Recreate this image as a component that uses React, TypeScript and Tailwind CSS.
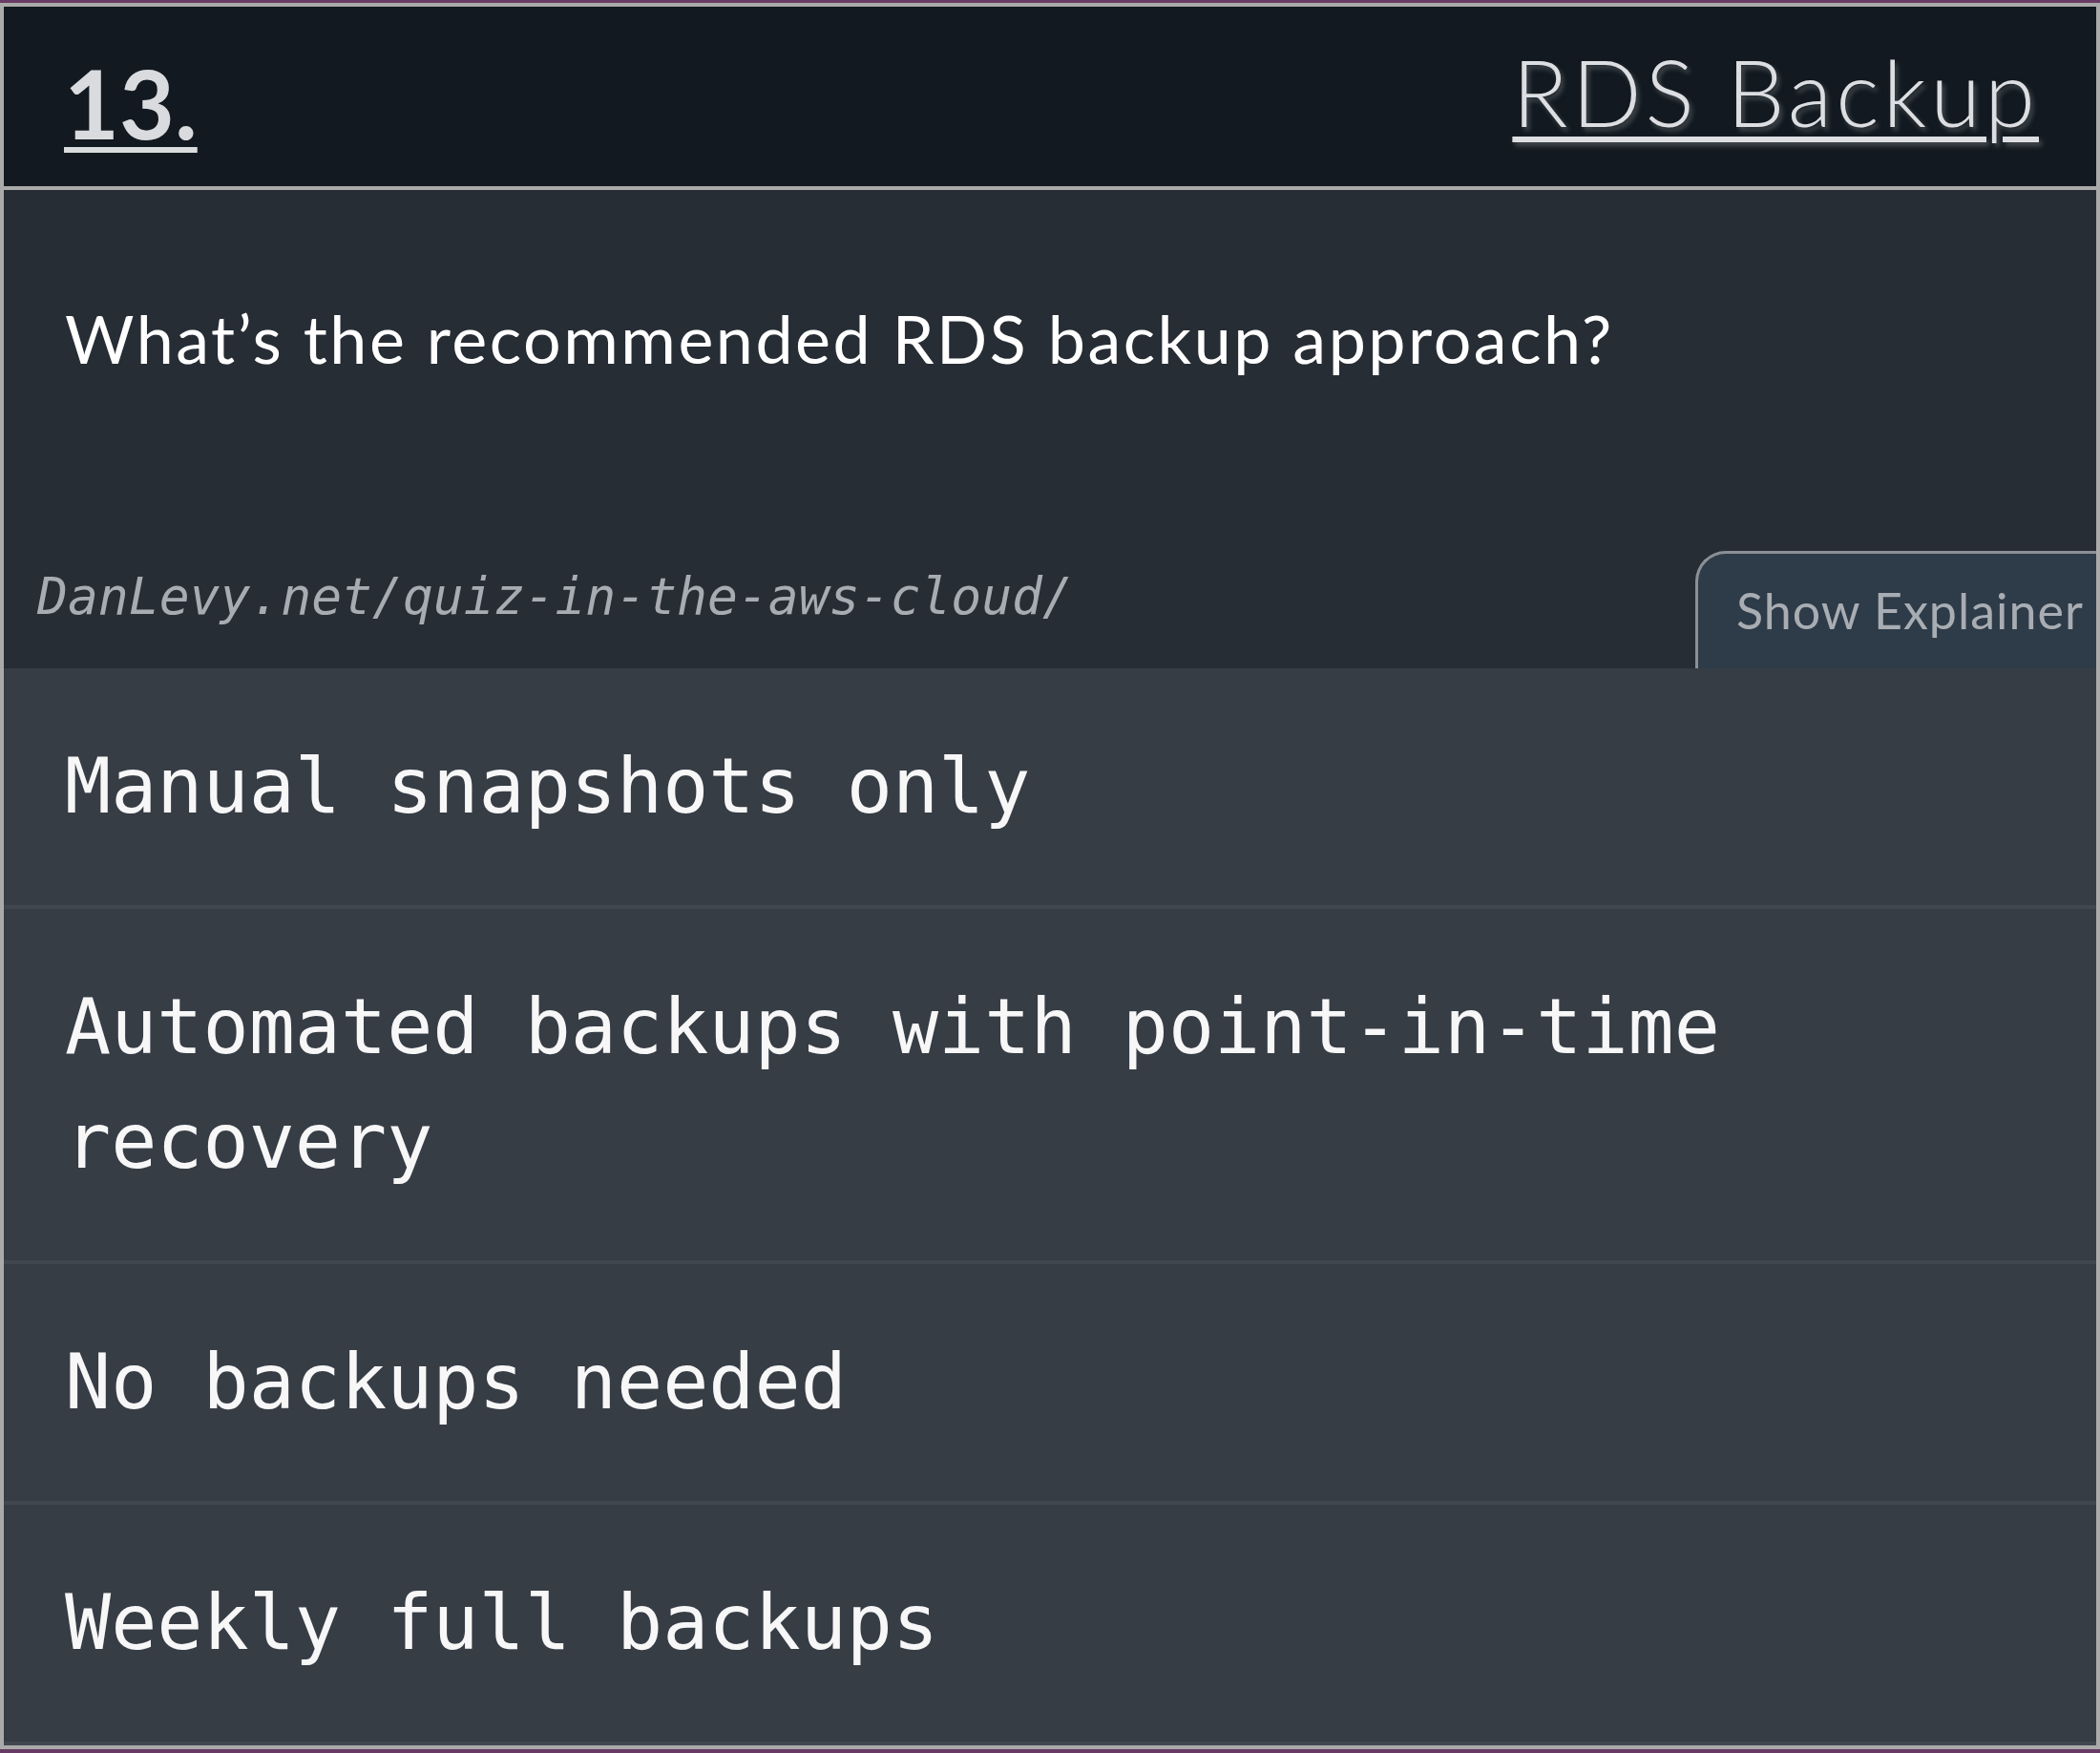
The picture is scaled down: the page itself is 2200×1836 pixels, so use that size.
// Quiz card: RDS Backup question

const options = [
  'Manual snapshots only',
  'Automated backups with point-in-time recovery',
  'No backups needed',
  'Weekly full backups',
];

export default function App() {
  return (
    <div className="min-h-screen bg-[#673b65] pt-[3px] pb-[4px]">
      <div className="border-4 border-[#aaaaaa] overflow-hidden">
        {/* header */}
        <header className="h-[192px] bg-[#121920] border-b-4 border-[#aaaaaa] pl-[63px] pr-16 flex items-start justify-between font-['Lato',sans-serif]">
          <span className="mt-[50px] text-[100px] leading-none font-bold text-[#d9dbde] underline decoration-[6px] underline-offset-[8px]">
            13.
          </span>
          <h1 className="mt-[41px] -mr-[4px] text-[96px] leading-none font-light tracking-[4px] text-[#dcdee1] underline decoration-[6px] underline-offset-[10px] [text-shadow:3px_4px_5px_rgba(120,125,130,0.5)]">
            RDS Backup
          </h1>
        </header>

        {/* question */}
        <section className="h-[501px] bg-[#272d34] flex flex-col justify-between">
          <p className="pt-[113px] px-16 text-[70px] leading-[1.2] tracking-[2.5px] text-white font-['Lato',sans-serif]">
            What’s the recommended RDS backup approach?
          </p>
          <div className="flex items-end justify-between">
            <span className="pl-[35px] pb-[36px] text-[53px] leading-[1.5] italic text-[#a7acb2] font-['DejaVu_Sans_Mono',monospace]">
              DanLevy.net/quiz-in-the-aws-cloud/
            </span>
            <button className="h-[123px] flex items-center pl-[40px] pr-[13px] pb-[2px] bg-[#2e3b48] border-t-[3px] border-l-[3px] border-[#8a9096] rounded-tl-[32px] text-[52px] tracking-[1px] text-[#a8adb3] font-['Lato',sans-serif] whitespace-nowrap">
              Show Explainer
            </button>
          </div>
        </section>

        {/* options */}
        <ul className="bg-[#373d45]">
          {options.map((opt) => (
            <li
              key={opt}
              className="px-16 py-16 border-b-4 border-[#41474f] text-[80px] leading-[1.5] text-[#f7f7f8] font-['DejaVu_Sans_Mono',monospace]"
            >
              {opt}
            </li>
          ))}
        </ul>
      </div>
    </div>
  );
}
